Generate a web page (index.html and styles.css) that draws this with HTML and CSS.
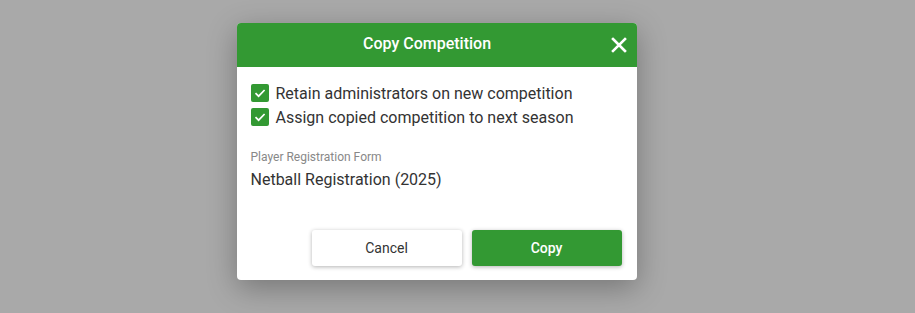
FILE: index.html
```html
<!DOCTYPE html>
<html lang="en">
<head>
    <meta charset="UTF-8">
    <meta name="viewport" content="width=device-width, initial-scale=1.0">
    <title>Copy Competition</title>
    <link rel="stylesheet" href="styles.css">
</head>
<body>
    <div class="overlay">
        <div class="dialog">
            <div class="dialog-header">
                <h2>Copy Competition</h2>
                <button class="close-btn" aria-label="Close">
                    <svg width="16" height="16" viewBox="0 0 16 16">
                        <path d="M2 2 L14 14 M14 2 L2 14" stroke="#fff" stroke-width="2.6" stroke-linecap="square"/>
                    </svg>
                </button>
            </div>
            <div class="dialog-body">
                <label class="check-row">
                    <span class="check-box">
                        <svg width="18" height="18" viewBox="0 0 18 18">
                            <path d="M4.5 9.2 L7.6 12.2 L13.6 6" fill="none" stroke="#fff" stroke-width="1.7"/>
                        </svg>
                    </span>
                    Retain administrators on new competition
                </label>
                <label class="check-row">
                    <span class="check-box">
                        <svg width="18" height="18" viewBox="0 0 18 18">
                            <path d="M4.5 9.2 L7.6 12.2 L13.6 6" fill="none" stroke="#fff" stroke-width="1.7"/>
                        </svg>
                    </span>
                    Assign copied competition to next season
                </label>

                <div class="field">
                    <div class="field-label">Player Registration Form</div>
                    <div class="field-value">Netball Registration (2025)</div>
                </div>
            </div>
            <div class="dialog-footer">
                <button class="btn btn-cancel">Cancel</button>
                <button class="btn btn-copy">Copy</button>
            </div>
        </div>
    </div>
</body>
</html>
```

FILE: styles.css
```css
body {
    font-family: Roboto, "Liberation Sans", sans-serif;
    margin: 0;
    padding: 0;
    background-color: #a9a9a9;
    color: #333;
}

.overlay {
    height: 313px;
    display: flex;
    justify-content: center;
    align-items: flex-start;
    padding: 23px 42px 0 0;
    box-sizing: border-box;
}

.dialog {
    width: 400px;
    background: #fff;
    border-radius: 4px;
    box-shadow: 0 8px 30px rgba(0, 0, 0, 0.3);
    overflow: hidden;
}

.dialog-header {
    position: relative;
    height: 44px;
    padding: 0 19px 4px 0;
    box-sizing: border-box;
    background-color: #339933;
    display: flex;
    align-items: center;
    justify-content: center;
}

.dialog-header h2 {
    margin: 0;
    color: #fff;
    font-size: 16px;
    font-weight: 500;
}

.close-btn {
    position: absolute;
    right: 9px;
    top: 13px;
    width: 18px;
    height: 18px;
    padding: 0;
    margin: 0;
    border: none;
    background: none;
    display: flex;
    align-items: center;
    justify-content: center;
    cursor: pointer;
}

.dialog-body {
    padding: 14px 14px 0 14px;
}

.check-row {
    display: flex;
    align-items: center;
    gap: 7px;
    height: 24px;
    font-size: 16px;
    color: #333;
}

.check-box {
    width: 18px;
    height: 18px;
    border-radius: 2px;
    background-color: #339933;
    display: flex;
}

.field {
    margin-top: 20px;
}

.field-label {
    font-size: 12px;
    color: #888;
    line-height: 16px;
}

.field-value {
    font-size: 16px;
    color: #333;
    margin-top: 5px;
    line-height: 20px;
}

.dialog-footer {
    display: flex;
    justify-content: flex-end;
    gap: 10px;
    padding: 40px 15px 14px 15px;
}

.btn {
    width: 150px;
    height: 36px;
    border: none;
    border-radius: 3px;
    font-family: Roboto, "Liberation Sans", sans-serif;
    font-size: 14px;
    cursor: pointer;
    box-shadow: 0 1px 4px rgba(0, 0, 0, 0.3);
}

.btn-cancel {
    background: #fff;
    color: #333;
}

.btn-copy {
    background-color: #339933;
    color: #fff;
    font-weight: 500;
}
```
